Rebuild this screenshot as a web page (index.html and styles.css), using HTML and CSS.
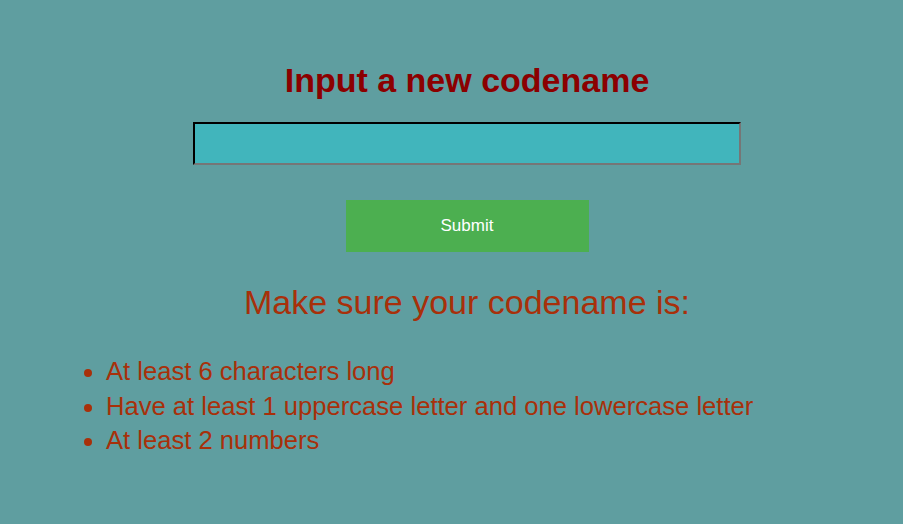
FILE: index.html
```html
<!DOCTYPE html>
<html>
<head>
<meta charset="utf-8">
<link rel="stylesheet" href="styles.css">
</head>
<body>
<div class="page">
  <form class="form">
    <h1 class="title">Input a new codename</h1>
    <input class="codename" type="text">
    <button class="submit" type="button">Submit</button>
    <h2 class="rules-title">Make sure your codename is:</h2>
  </form>
  <ul class="rules">
    <li>At least 6 characters long</li>
    <li>Have at least 1 uppercase letter and one lowercase letter</li>
    <li>At least 2 numbers</li>
  </ul>
</div>
</body>
</html>
```

FILE: styles.css
```css
html, body {
  margin: 0;
  padding: 0;
  background: #5f9ea0;
  font-family: "Liberation Sans", Arial, sans-serif;
}
.page {
  padding: 61px 0 0 0;
}
.form {
  display: flex;
  flex-direction: column;
  align-items: center;
  padding-left: 31px;
}
.title {
  margin: 0;
  font-size: 34px;
  font-weight: bold;
  color: #8b0000;
  line-height: 38px;
}
.codename {
  margin-top: 23px;
  width: 548px;
  height: 43px;
  box-sizing: border-box;
  background: #41b5bc;
  border: 2px inset #767676;
  border-top-color: #1e1e1e;
  border-left-color: #1e1e1e;
  border-right-color: #767676;
  border-bottom-color: #767676;
  padding: 0;
}
.submit {
  margin-top: 35px;
  width: 243px;
  height: 52px;
  background: #4caf50;
  border: none;
  color: #fff;
  font-family: "Liberation Sans", Arial, sans-serif;
  font-size: 17px;
}
.rules-title {
  margin: 30px 0 0 0;
  font-size: 34px;
  font-weight: normal;
  color: #a8300a;
  line-height: 40px;
}
.rules {
  margin: 32px 0 0 0;
  padding-left: 106px;
  color: #a8300a;
  font-size: 25.6px;
  line-height: 34.5px;
}
```
